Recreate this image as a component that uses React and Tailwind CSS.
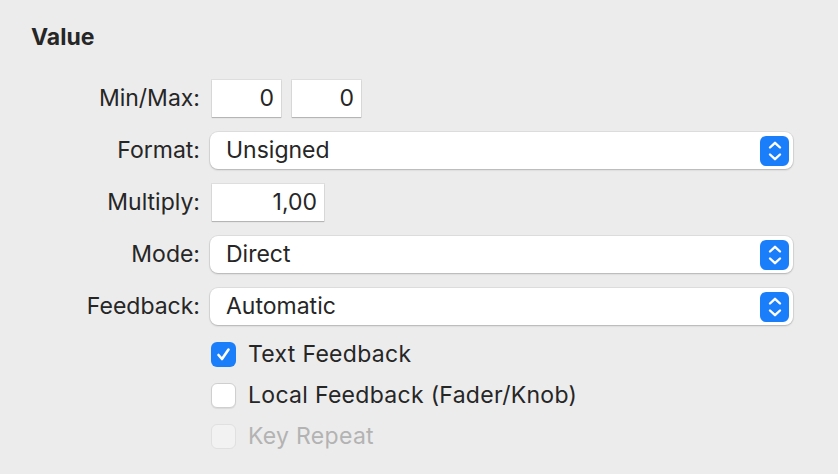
import { useState } from 'react';

const font = { fontFamily: 'Inter, "Noto Sans", sans-serif' };

function Label({ children }) {
  return <div className="w-[200px] shrink-0 text-right text-[23px] text-[#262626]">{children}</div>;
}

function NumberField({ value, width }) {
  return (
    <div
      className={`${width} h-[37px] bg-white flex items-center justify-end pr-[7px] text-[23px] text-[#262626] shadow-[0_0_0_1px_rgba(0,0,0,0.06),0_1px_1px_rgba(0,0,0,0.18)]`}
    >
      {value}
    </div>
  );
}

function Stepper() {
  return (
    <div className="w-[29px] h-[30px] rounded-[6px] bg-[#1a7dfa] flex items-center justify-center">
      <svg width="16" height="22" viewBox="0 0 16 22" fill="none" stroke="white" strokeWidth="2.4" strokeLinecap="round" strokeLinejoin="round">
        <path d="M3 7.5 L8 2.8 L13 7.5" />
        <path d="M3 14.5 L8 19.2 L13 14.5" />
      </svg>
    </div>
  );
}

function Popup({ value }) {
  return (
    <div className="flex-1 h-[37px] bg-white rounded-[8px] flex items-center justify-between pl-[16px] pr-[4px] text-[23px] text-[#262626] shadow-[0_0_0_1px_rgba(0,0,0,0.06),0_1px_2px_rgba(0,0,0,0.2)]">
      <span>{value}</span>
      <Stepper />
    </div>
  );
}

function Check({ checked, disabled, label, onToggle }) {
  return (
    <div className="flex items-center h-[25px] gap-[12px] pl-[211px]">
      <button
        onClick={onToggle}
        disabled={disabled}
        className={
          checked
            ? 'w-[25px] h-[25px] rounded-[6px] bg-[#1a7dfa] flex items-center justify-center'
            : disabled
            ? 'w-[25px] h-[25px] rounded-[6px] bg-[#f2f2f2] border border-[#e0e0e0]'
            : 'w-[25px] h-[25px] rounded-[6px] bg-white border border-[#cfcfcf] shadow-[0_1px_1px_rgba(0,0,0,0.08)]'
        }
      >
        {checked && (
          <svg width="17" height="17" viewBox="0 0 17 17" fill="none" stroke="white" strokeWidth="2.6" strokeLinecap="round" strokeLinejoin="round">
            <path d="M3.5 9 L7 13 L13.5 3.5" />
          </svg>
        )}
      </button>
      <span className={disabled ? 'text-[23px] tracking-[0.3px] text-[#b3b3b3]' : 'text-[23px] tracking-[0.3px] text-[#262626]'}>{label}</span>
    </div>
  );
}

export default function App() {
  const [textFb, setTextFb] = useState(true);
  const [localFb, setLocalFb] = useState(false);

  return (
    <div className="w-[838px] h-[474px] bg-[#ececec] overflow-hidden" style={font}>
      <div className="pl-[31px] pt-[22px] text-[23px] font-bold text-[#262626] leading-[30px]">Value</div>

      <div className="mt-[28px] flex flex-col gap-[15px] pr-[45px]">
        <div className="flex items-center h-[37px]">
          <Label>Min/Max:</Label>
          <div className="flex gap-[11px] ml-[12px]">
            <NumberField value="0" width="w-[69px]" />
            <NumberField value="0" width="w-[69px]" />
          </div>
        </div>
        <div className="flex items-center h-[37px]">
          <Label>Format:</Label>
          <div className="flex-1 flex ml-[10px]">
            <Popup value="Unsigned" />
          </div>
        </div>
        <div className="flex items-center h-[37px]">
          <Label>Multiply:</Label>
          <div className="ml-[12px]">
            <NumberField value="1,00" width="w-[112px]" />
          </div>
        </div>
        <div className="flex items-center h-[37px]">
          <Label>Mode:</Label>
          <div className="flex-1 flex ml-[10px]">
            <Popup value="Direct" />
          </div>
        </div>
        <div className="flex items-center h-[37px]">
          <Label>Feedback:</Label>
          <div className="flex-1 flex ml-[10px]">
            <Popup value="Automatic" />
          </div>
        </div>
      </div>

      <div className="mt-[17px] flex flex-col gap-[16px]">
        <Check checked={textFb} label="Text Feedback" onToggle={() => setTextFb(!textFb)} />
        <Check checked={localFb} label="Local Feedback (Fader/Knob)" onToggle={() => setLocalFb(!localFb)} />
        <Check disabled label="Key Repeat" />
      </div>
    </div>
  );
}
